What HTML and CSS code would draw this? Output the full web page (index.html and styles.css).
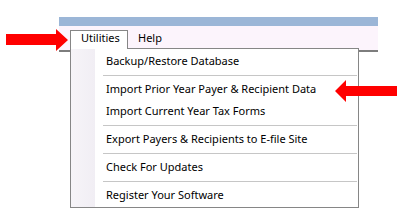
FILE: index.html
```html
<!DOCTYPE html>
<html>
<head>
<meta charset="utf-8">
<link rel="stylesheet" href="styles.css">
</head>
<body>
<div class="stage">
  <div class="app">
    <div class="titlebar"></div>
    <div class="menubar">
      <div class="menu-root">
        <div class="menu-tab">Utilities</div>
        <div class="dropdown">
          <div class="item">Backup/Restore Database</div>
          <div class="sep"></div>
          <div class="item">Import Prior Year Payer &amp; Recipient Data</div>
          <div class="item">Import Current Year Tax Forms</div>
          <div class="sep"></div>
          <div class="item">Export Payers &amp; Recipients to E-file Site</div>
          <div class="sep"></div>
          <div class="item">Check For Updates</div>
          <div class="sep"></div>
          <div class="item">Register Your Software</div>
        </div>
      </div>
      <div class="menu-title">Help</div>
    </div>
  </div>
  <svg class="arrow arrow-left" width="62" height="22" viewBox="0 0 62 22"><polygon points="0,5 50,5 50,0 62,11 50,22 50,16 0,16" fill="#ff0000"/></svg>
  <svg class="arrow arrow-right" width="62" height="22" viewBox="0 0 62 22"><polygon points="0,11 11,0 11,6 62,6 62,16 11,16 11,22" fill="#ff0000"/></svg>
</div>
</body>
</html>
```
FILE: styles.css
```css
html, body {
  margin: 0;
  padding: 0;
  background: #ffffff;
}
.stage {
  position: relative;
  width: 406px;
  height: 221px;
  overflow: hidden;
  font-family: "Noto Sans", "Liberation Sans", Arial, sans-serif;
  font-size: 11px;
  color: #000;
}
.app {
  margin: 17px 0 0 59px;
  width: 319px;
}
.titlebar {
  height: 9px;
  background: #9bb6d7;
}
.menubar {
  background: #fcf4fc;
  border-bottom: 2px solid #7d7d7d;
  display: flex;
  align-items: flex-start;
  padding: 4px 0 0 11px;
  height: 20px;
}
.menu-root {
  position: relative;
  width: 58px;
}
.menu-tab {
  position: relative;
  z-index: 2;
  box-sizing: border-box;
  width: 58px;
  height: 19px;
  border: 1px solid #868686;
  border-bottom: none;
  background: #fff;
  padding: 0 0 0 10px;
  line-height: 14px;
}
.menu-title {
  margin-left: 10px;
  padding-top: 1px;
  line-height: 14px;
}
.dropdown {
  position: absolute;
  z-index: 1;
  top: 18px;
  left: 0;
  width: 287px;
  border: 1px solid #868686;
  padding: 1px 0;
  background: linear-gradient(to right, #f6f4f8 0, #f1eef4 24px, #ffffff 24px);
}
.item {
  height: 22px;
  line-height: 22px;
  padding-left: 35px;
  white-space: nowrap;
}
.sep {
  height: 1px;
  margin: 3px 1px 2px 32px;
  background: #c6c6c6;
}
.arrow {
  position: absolute;
  z-index: 5;
  display: block;
}
.arrow-left {
  left: 6px;
  top: 29px;
}
.arrow-right {
  left: 335px;
  top: 80px;
}
```
